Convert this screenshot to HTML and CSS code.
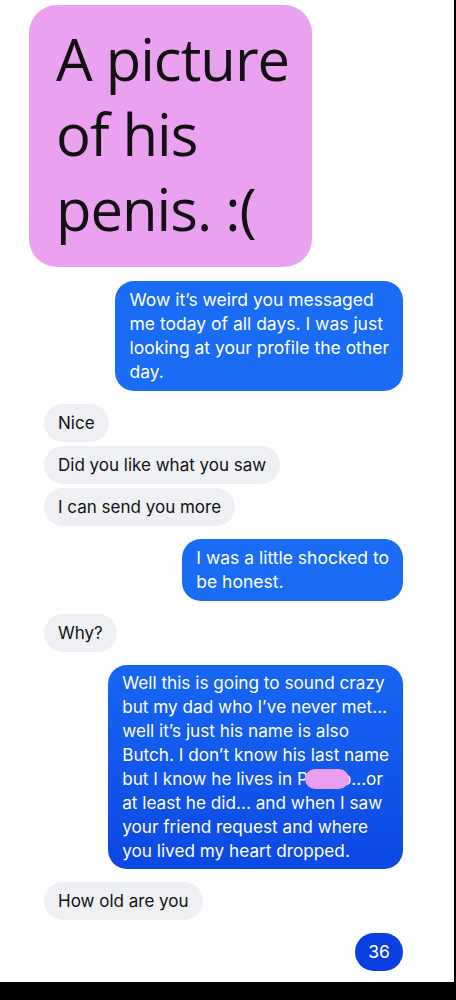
FILE: index.html
```html
<!DOCTYPE html>
<html lang="en">
<head>
    <meta charset="UTF-8">
    <meta name="viewport" content="width=device-width, initial-scale=1.0">
    <title>Messages</title>
    <link rel="stylesheet" href="styles.css">
</head>
<body>

<div class="screen">
    <div class="callout">
        <p>A picture<br>of his<br>penis. :(</p>
    </div>

    <div class="thread">
        <div class="msg out">Wow it’s weird you messaged<br>me today of all days. I was just<br>looking at your profile the other<br>day.</div>

        <div class="group">
            <div class="msg in">Nice</div>
            <div class="msg in">Did you like what you saw</div>
            <div class="msg in">I can send you more</div>
        </div>

        <div class="msg out">I was a little shocked to<br>be honest.</div>

        <div class="msg in">Why?</div>

        <div class="msg out late">Well this is going to sound crazy<br>but my dad who I’ve never met...<br>well it’s just his name is also<br>Butch. I don’t know his last name<br>but I know he lives in P<span class="blot"></span>o...or<br>at least he did... and when I saw<br>your friend request and where<br>you lived my heart dropped.</div>

        <div class="msg in">How old are you</div>

        <div class="msg out age">36</div>
    </div>
</div>

</body>
</html>
```

FILE: styles.css
```css
body {
    margin: 0;
    padding: 0;
    background-color: #000;
    font-family: 'Inter', 'Roboto', sans-serif;
}
.screen {
    width: 454px;
    height: 982px;
    background-color: #fff;
    overflow: hidden;
}
.callout {
    width: 283px;
    height: 262px;
    margin: 5px 0 0 29px;
    background-color: #eaa1f0;
    border-radius: 28px;
    box-sizing: border-box;
    padding: 16px 0 0 27px;
}
.callout p {
    margin: 0;
    font-family: 'Open Sans', sans-serif;
    font-size: 58px;
    line-height: 75px;
    color: #111;
    letter-spacing: -1px;
}
.thread {
    display: flex;
    flex-direction: column;
    gap: 13px;
    padding: 14px 51px 0 44px;
}
.group {
    display: flex;
    flex-direction: column;
    gap: 4px;
}
.msg {
    padding: 7px 14px;
    font-size: 17.5px;
    line-height: 24px;
    border-radius: 19px;
    max-width: 310px;
}
.msg.in {
    align-self: flex-start;
    background-color: #eff0f3;
    color: #111;
    font-size: 17px;
}
.msg.out {
    align-self: flex-end;
    background-color: #1a6cf5;
    color: #fff;
}
.msg.late {
    background: linear-gradient(#1766f3, #0d48e3);
    padding: 6px 14px;
    font-size: 17.2px;
}
.msg.age {
    width: 48px;
    height: 38px;
    box-sizing: border-box;
    padding: 7px 0;
    text-align: center;
    background-color: #0a3fe1;
    border-radius: 20px;
}
.blot {
    display: inline-block;
    position: relative;
    z-index: 1;
    width: 44px;
    height: 20px;
    vertical-align: -4px;
    margin: 0 -8px 0 -3px;
    border-radius: 10px;
    background-color: #ec9ff0;
}
```
